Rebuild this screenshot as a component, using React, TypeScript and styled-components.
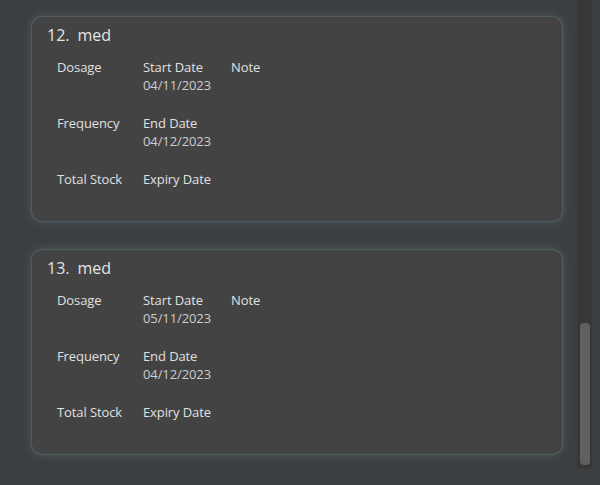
import React from "react";
import styled, { createGlobalStyle } from "styled-components";

const Global = createGlobalStyle`
  html, body { margin: 0; padding: 0; background: #3c3f41; }
  body { font-family: "Open Sans", "Noto Sans", sans-serif; }
`;

const Page = styled.div`
  width: 600px;
  height: 485px;
  display: flex;
  background: #3c3f41;
  overflow: hidden;
`;

const List = styled.div`
  flex: 1;
  display: flex;
  flex-direction: column;
  gap: 29px;
  padding: 17px 15px 0 32px;
`;

const Card = styled.div`
  height: 204px;
  box-sizing: border-box;
  background: #434343;
  border-radius: 10px;
  box-shadow: 0 0 1px 1px rgba(88, 102, 108, 0.7), 0 0 8px 2px rgba(86, 100, 106, 0.55);
  padding: 8px 0 14px 15px;
  display: flex;
  flex-direction: column;
`;

const Title = styled.div`
  font-size: 16px;
  line-height: 20px;
  color: #e4e4e4;
  display: flex;
  gap: 8px;
`;

const Fields = styled.div`
  margin-top: 13px;
  margin-left: 10px;
  display: grid;
  grid-template-columns: 86px 88px auto;
  grid-auto-rows: 36px;
  row-gap: 20px;
`;

const Cell = styled.div`
  display: flex;
  flex-direction: column;
  font-size: 13px;
  line-height: 18px;
  letter-spacing: -0.1px;
`;

const Label = styled.span`
  color: #e0e0e0;
`;

const Value = styled.span`
  color: #cdcdcd;
  min-height: 18px;
`;

const Track = styled.div`
  width: 15px;
  height: 469px;
  margin-right: 8px;
  background: #383636;
  position: relative;
`;

const Thumb = styled.div`
  position: absolute;
  left: 3px;
  top: 323px;
  width: 10px;
  height: 142px;
  border-radius: 4px;
  background: #606060;
`;

type Med = { idx: number; name: string; start: string; end: string };

const meds: Med[] = [
  { idx: 12, name: "med", start: "04/11/2023", end: "04/12/2023" },
  { idx: 13, name: "med", start: "05/11/2023", end: "04/12/2023" },
];

const Field = ({ label, value }: { label: string; value?: string }) => (
  <Cell>
    <Label>{label}</Label>
    <Value>{value ?? ""}</Value>
  </Cell>
);

export default function App() {
  return (
    <Page>
      <Global />
      <List>
        {meds.map((m) => (
          <Card key={m.idx}>
            <Title>
              <span>{m.idx}.</span>
              <span>{m.name}</span>
            </Title>
            <Fields>
              <Field label="Dosage" />
              <Field label="Start Date" value={m.start} />
              <Field label="Note" />
              <Field label="Frequency" />
              <Field label="End Date" value={m.end} />
              <span />
              <Field label="Total Stock" />
              <Field label="Expiry Date" />
            </Fields>
          </Card>
        ))}
      </List>
      <Track>
        <Thumb />
      </Track>
    </Page>
  );
}
